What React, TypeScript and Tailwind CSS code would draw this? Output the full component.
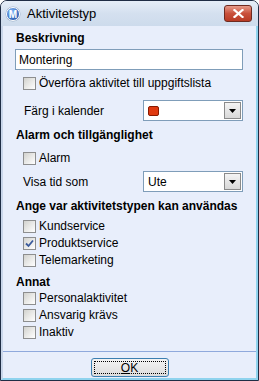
import React from "react"

function Box({ checked = false }: { checked?: boolean }) {
  return (
    <span className="flex h-[13px] w-[13px] shrink-0 items-center justify-center border border-[#8d8e8f] bg-gradient-to-br from-[#d2d2ce] via-[#e9e9e7] to-white">
      {checked && (
        <svg width="9" height="9" viewBox="0 0 9 9">
          <path d="M1 4.5 L3.5 7 L8 1.5" fill="none" stroke="#3a5a9c" strokeWidth="1.8" />
        </svg>
      )}
    </span>
  )
}

function Check({ label, checked = false }: { label: string; checked?: boolean }) {
  return (
    <div className="flex h-[13px] items-center gap-[3px] pl-[20px]">
      <Box checked={checked} />
      <span className="leading-[13px]">{label}</span>
    </div>
  )
}

function Combo({ children }: { children: React.ReactNode }) {
  return (
    <div className="flex h-[21px] w-[100px] items-center border border-[#7f9db9] bg-white pr-[1px]">
      <div className="flex flex-1 items-center pl-[4px]">{children}</div>
      <div className="flex h-[17px] w-[17px] items-center justify-center border border-[#8a8a8a] bg-gradient-to-b from-[#f4f4f4] to-[#d8d8d8]">
        <svg width="7" height="4" viewBox="0 0 7 4">
          <path d="M0 0 H7 L3.5 4 Z" fill="#000" />
        </svg>
      </div>
    </div>
  )
}

function Heading({ children }: { children: React.ReactNode }) {
  return <div className="pl-[13px] text-[12px] leading-[14px] font-bold">{children}</div>
}

export default function App() {
  return (
    <div className="h-[381px] w-[259px] overflow-hidden [font-family:'Liberation_Sans',Arial,sans-serif] text-[12px] text-black">
      <div className="flex h-full flex-col rounded-t-[7px] border border-[#1f2d45] bg-[#eef3fb]">
        {/* title bar */}
        <div className="flex h-[25px] shrink-0 items-center rounded-t-[6px] bg-gradient-to-b from-[#e6eef8] via-[#d4e0ef] to-[#cddbec] pl-[4px] pr-[6px]">
          <svg width="16" height="16" viewBox="0 0 16 16" className="shrink-0">
            <defs>
              <radialGradient id="lg" cx="40%" cy="35%" r="70%">
                <stop offset="0" stopColor="#8fc3ff" />
                <stop offset="1" stopColor="#1c4fa8" />
              </radialGradient>
            </defs>
            <circle cx="8" cy="8" r="7.5" fill="#9fb3cc" />
            <circle cx="8" cy="8" r="6.5" fill="url(#lg)" stroke="#ffffff" strokeWidth="1" />
            <text x="8" y="11.5" textAnchor="middle" fontSize="10" fontWeight="bold" fill="#ffffff" fontFamily="Liberation Sans, Arial, sans-serif">M</text>
          </svg>
          <span className="ml-[6px] text-[13px] leading-none">Aktivitetstyp</span>
          <div className="ml-auto flex h-[17px] w-[28px] items-center justify-center rounded-[3px] border border-[#6e2a20] bg-gradient-to-b from-[#e59a8a] via-[#c9503b] to-[#b83a24]">
            <svg width="11" height="9" viewBox="0 0 11 9">
              <path d="M1.5 1 L9.5 8 M9.5 1 L1.5 8" stroke="#ffffff" strokeWidth="2.2" strokeLinecap="square" />
            </svg>
          </div>
        </div>

        {/* body */}
        <div className="flex flex-1 flex-col border-x-2 border-b-2 border-l-[#c9d6ea] border-r-[#8fd3ee] border-b-[#8fd3ee] bg-[#e8eefb]">
          <div className="mt-[5px]">
            <Heading>Beskrivning</Heading>
          </div>
          <div className="mt-[4px] ml-[12px] flex h-[21px] w-[228px] items-center border border-[#7f9db9] bg-white pl-[3px]">
            Montering
          </div>
          <div className="mt-[7px]">
            <Check label="Överföra aktivitet till uppgiftslista" />
          </div>
          <div className="mt-[10px] flex items-center pl-[21px] pr-[13px]">
            <span className="flex-1">Färg i kalender</span>
            <Combo>
              <span className="h-[10px] w-[11px] rounded-[2px] border border-[#8a1a00] bg-[#e03a10]" />
            </Combo>
          </div>
          <div className="mt-[7px]">
            <Heading>Alarm och tillgänglighet</Heading>
          </div>
          <div className="mt-[10px]">
            <Check label="Alarm" />
          </div>
          <div className="mt-[6px] flex items-center pl-[20px] pr-[13px]">
            <span className="flex-1">Visa tid som</span>
            <Combo>
              <span>Ute</span>
            </Combo>
          </div>
          <div className="mt-[7px]">
            <Heading>Ange var aktivitetstypen kan användas</Heading>
          </div>
          <div className="mt-[7px] flex flex-col gap-[4px]">
            <Check label="Kundservice" />
            <Check label="Produktservice" checked />
            <Check label="Telemarketing" />
          </div>
          <div className="mt-[8px]">
            <Heading>Annat</Heading>
          </div>
          <div className="mt-[3px] flex flex-col gap-[4px]">
            <Check label="Personalaktivitet" />
            <Check label="Ansvarig krävs" />
            <Check label="Inaktiv" />
          </div>
          <div className="mt-[12px] h-px bg-[#8fa9dc]" />
          <div className="flex flex-1 items-start justify-center pt-[6px]">
            <button className="flex h-[19px] w-[78px] items-center justify-center rounded-[3px] border border-[#3c7fb1] bg-gradient-to-b from-[#f4f4f4] to-[#dcdcdc] p-[2px]">
              <span className="flex h-full w-full items-center justify-center border border-dotted border-black leading-none">
                <span className="underline">O</span>K
              </span>
            </button>
          </div>
        </div>
      </div>
    </div>
  )
}
